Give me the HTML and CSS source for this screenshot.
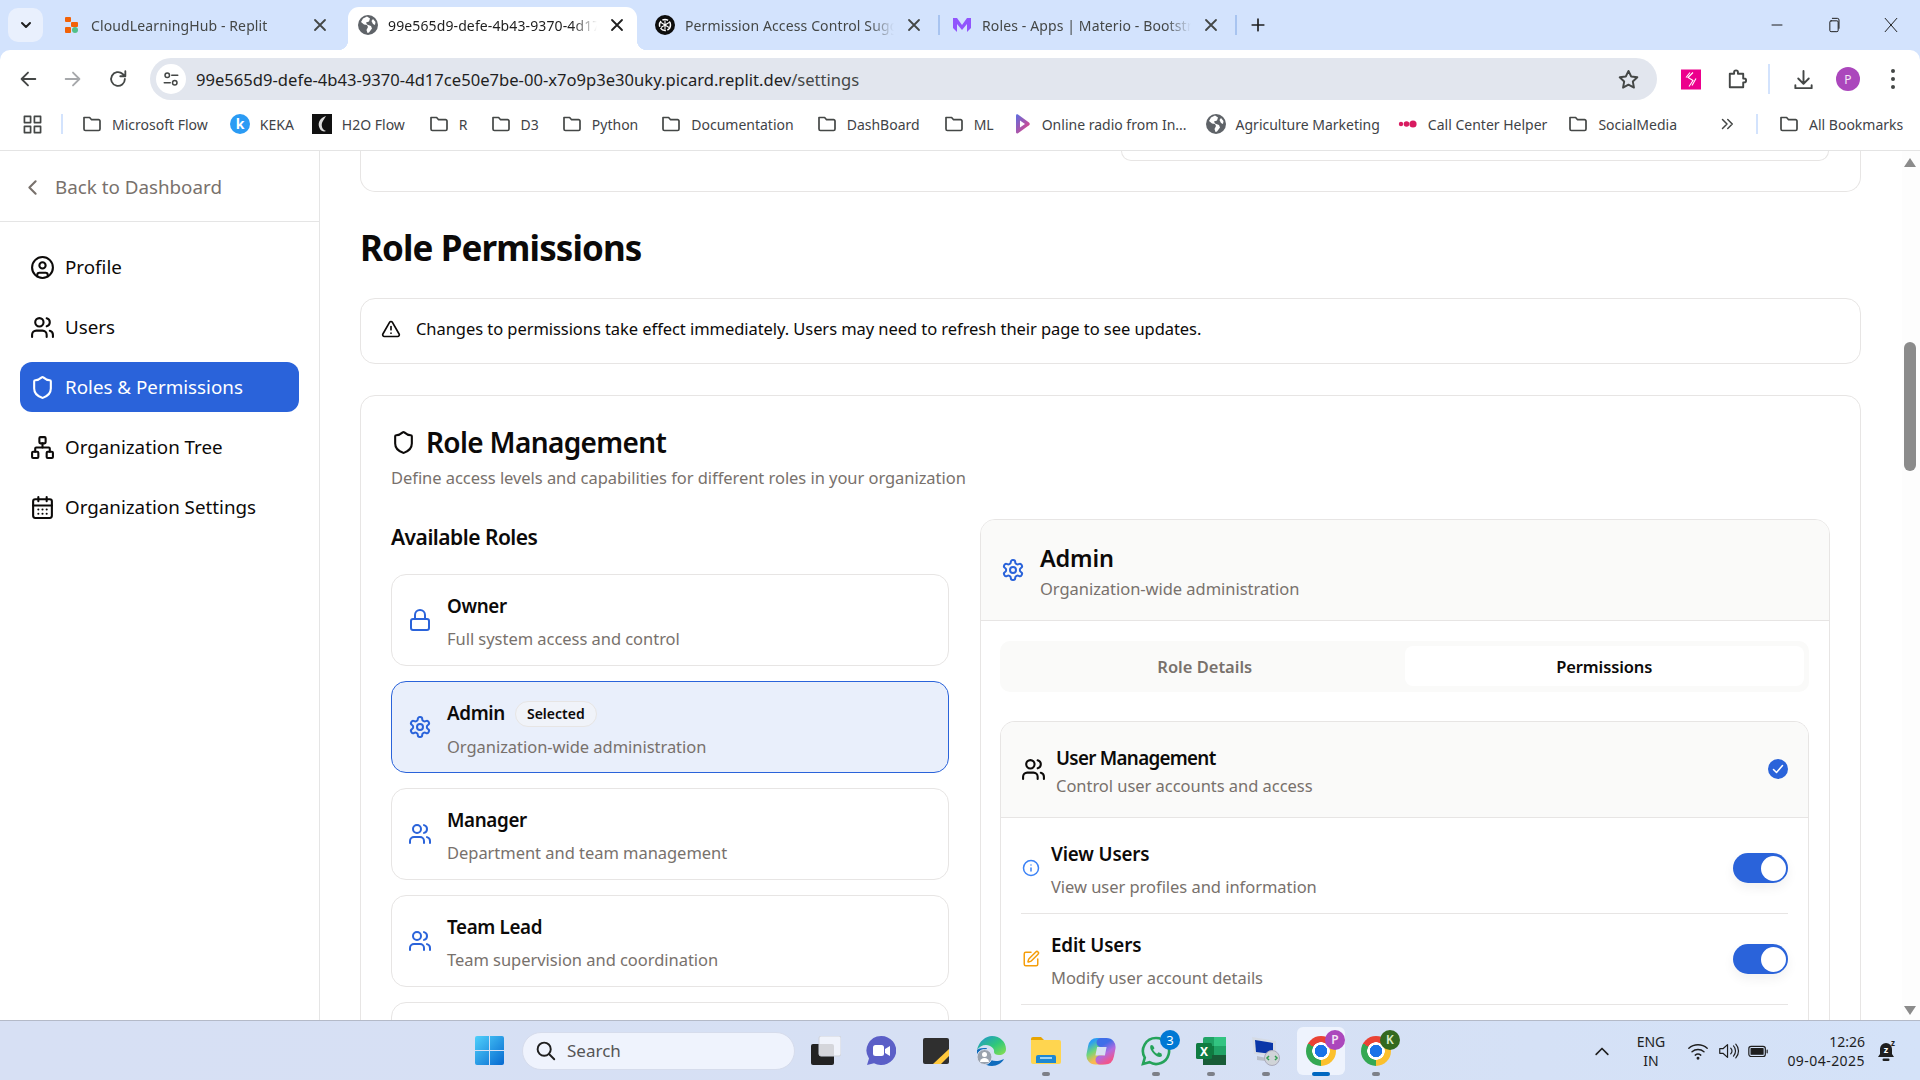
FILE: index.html
```html
<!DOCTYPE html>
<html lang="en">
<head>
<meta charset="utf-8">
<title>Role Permissions</title>
<link rel="stylesheet" href="styles.css">
</head>
<body>
<svg class="sprite" xmlns="http://www.w3.org/2000/svg">
  <symbol id="i-user-circle" viewBox="0 0 24 24"><circle cx="12" cy="12" r="10"/><circle cx="12" cy="10" r="3"/><path d="M7 20.662V19a2 2 0 0 1 2-2h6a2 2 0 0 1 2 2v1.662"/></symbol>
  <symbol id="i-users" viewBox="0 0 24 24"><path d="M16 21v-2a4 4 0 0 0-4-4H6a4 4 0 0 0-4 4v2"/><circle cx="9" cy="7" r="4"/><path d="M22 21v-2a4 4 0 0 0-3-3.87"/><path d="M16 3.13a4 4 0 0 1 0 7.75"/></symbol>
  <symbol id="i-shield" viewBox="0 0 24 24"><path d="M20 13c0 5-3.5 7.5-7.66 8.95a1 1 0 0 1-.67-.01C7.5 20.5 4 18 4 13V6a1 1 0 0 1 1-1c2 0 4.5-1.2 6.24-2.72a1.17 1.17 0 0 1 1.52 0C14.51 3.81 17 5 19 5a1 1 0 0 1 1 1z"/></symbol>
  <symbol id="i-network" viewBox="0 0 24 24"><rect x="16" y="16" width="6" height="6" rx="1"/><rect x="2" y="16" width="6" height="6" rx="1"/><rect x="9" y="2" width="6" height="6" rx="1"/><path d="M5 16v-3a1 1 0 0 1 1-1h12a1 1 0 0 1 1 1v3"/><path d="M12 12V8"/></symbol>
  <symbol id="i-calendar" viewBox="0 0 24 24"><path d="M8 2v4"/><path d="M16 2v4"/><rect width="18" height="18" x="3" y="4" rx="2"/><path d="M3 10h18"/><path d="M8 14h.01"/><path d="M12 14h.01"/><path d="M16 14h.01"/><path d="M8 18h.01"/><path d="M12 18h.01"/><path d="M16 18h.01"/></symbol>
  <symbol id="i-chevron" viewBox="0 0 24 24"><path d="m15 18-6-6 6-6"/></symbol>
  <symbol id="i-alert" viewBox="0 0 24 24"><path d="m21.73 18-8-14a2 2 0 0 0-3.48 0l-8 14A2 2 0 0 0 4 21h16a2 2 0 0 0 1.73-3"/><path d="M12 9v4"/><path d="M12 17h.01"/></symbol>
  <symbol id="i-lock" viewBox="0 0 24 24"><rect width="18" height="11" x="3" y="11" rx="2" ry="2"/><path d="M7 11V7a5 5 0 0 1 10 0v4"/></symbol>
  <symbol id="i-gear" viewBox="0 0 24 24"><path d="M12.22 2h-.44a2 2 0 0 0-2 2v.18a2 2 0 0 1-1 1.73l-.43.25a2 2 0 0 1-2 0l-.15-.08a2 2 0 0 0-2.73.73l-.22.38a2 2 0 0 0 .73 2.73l.15.1a2 2 0 0 1 1 1.72v.51a2 2 0 0 1-1 1.74l-.15.09a2 2 0 0 0-.73 2.73l.22.38a2 2 0 0 0 2.73.73l.15-.08a2 2 0 0 1 2 0l.43.25a2 2 0 0 1 1 1.73V20a2 2 0 0 0 2 2h.44a2 2 0 0 0 2-2v-.18a2 2 0 0 1 1-1.73l.43-.25a2 2 0 0 1 2 0l.15.08a2 2 0 0 0 2.73-.73l.22-.39a2 2 0 0 0-.73-2.73l-.15-.08a2 2 0 0 1-1-1.74v-.5a2 2 0 0 1 1-1.74l.15-.09a2 2 0 0 0 .73-2.73l-.22-.38a2 2 0 0 0-2.73-.73l-.15.08a2 2 0 0 1-2 0l-.43-.25a2 2 0 0 1-1-1.73V4a2 2 0 0 0-2-2z"/><circle cx="12" cy="12" r="3"/></symbol>
  <symbol id="i-info" viewBox="0 0 24 24"><circle cx="12" cy="12" r="10"/><path d="M12 16v-4"/><path d="M12 8h.01"/></symbol>
  <symbol id="i-pen" viewBox="0 0 24 24"><path d="M12 3H5a2 2 0 0 0-2 2v14a2 2 0 0 0 2 2h14a2 2 0 0 0 2-2v-7"/><path d="M18.375 2.625a1 1 0 0 1 3 3l-9.013 9.014a2 2 0 0 1-.853.505l-2.873.84a.5.5 0 0 1-.62-.62l.84-2.873a2 2 0 0 1 .506-.852z"/></symbol>
  <symbol id="b-folder" viewBox="0 0 20 20"><path d="M2 3.500h5.600l2 2.200h7a1.400 1.400 0 0 1 1.400 1.400v8a1.400 1.400 0 0 1-1.400 1.400H3.400A1.400 1.400 0 0 1 2 15.100z"/></symbol>
  <symbol id="b-globe" viewBox="0 0 20 20"><circle cx="10" cy="10" r="10" fill="#5f6368"/><path d="M9 1.500 5 3.500 3 7l3 2.500 3 .5 1 2-1.500 3 1 3 1.500-.5 3-4-1-2.500-4-1.500-1-2 3-1 1-3zM15 4l2.500 3-.5 3-2-1-1.500-3z" fill="#fff"/></symbol>
</svg>

<header class="tabstrip">
  <div class="tab-menu"><svg class="glyph g14" viewBox="0 0 24 24"><path d="m6 9 6 6 6-6"/></svg></div>
  <div class="tab">
    <svg class="favicon" viewBox="0 0 20 20"><rect x="4" y="2" width="6" height="5" rx="1" fill="#f26207"/><rect x="10" y="7" width="7" height="5" rx="1" fill="#f26207"/><rect x="4" y="12" width="6" height="6" rx="1" fill="#f26207"/><circle cx="14" cy="15" r="3" fill="#52c08a"/></svg>
    <span class="tab-title">CloudLearningHub - Replit</span>
    <svg class="glyph g-close" viewBox="0 0 24 24"><path d="M6 6l12 12M18 6 6 18"/></svg>
  </div>
  <div class="tab tab-active">
    <svg class="favicon"><use href="#b-globe"/></svg>
    <span class="tab-title">99e565d9-defe-4b43-9370-4d17ce50e7be</span>
    <svg class="glyph g-close" viewBox="0 0 24 24"><path d="M6 6l12 12M18 6 6 18"/></svg>
  </div>
  <div class="tab tab-sep">
    <svg class="favicon" viewBox="0 0 20 20"><circle cx="10" cy="10" r="10" fill="#0d0d0d"/><circle cx="10" cy="10" r="5.500" fill="none" stroke="#fff" stroke-width="1.500" stroke-dasharray="6 1.500"/><path d="M10 5.500v9M6 7.500l8 5M14 7.500l-8 5" stroke="#fff" stroke-width="1.100"/></svg>
    <span class="tab-title">Permission Access Control Suggestions</span>
    <svg class="glyph g-close" viewBox="0 0 24 24"><path d="M6 6l12 12M18 6 6 18"/></svg>
  </div>
  <div class="tab tab-sep">
    <svg class="favicon" viewBox="0 0 20 20"><path d="M1 3h4l5 7 5-7h4v10l-4 4V9l-5 6-5-6v8l-4-4z" fill="#9155fd"/></svg>
    <span class="tab-title">Roles - Apps | Materio - Bootstrap Admin</span>
    <svg class="glyph g-close" viewBox="0 0 24 24"><path d="M6 6l12 12M18 6 6 18"/></svg>
  </div>
  <svg class="glyph g-plus" viewBox="0 0 24 24"><path d="M12 5v14M5 12h14"/></svg>
  <div class="window-controls">
    <svg class="glyph g-win" viewBox="0 0 24 24"><path d="M6 12h12"/></svg>
    <svg class="glyph g-win" viewBox="0 0 24 24"><rect x="7" y="7" width="10" height="13" rx="1.500"/><path d="M10 4h6a2 2 0 0 1 2 2v10"/></svg>
    <svg class="glyph g-win" viewBox="0 0 24 24"><path d="M5 4l14 16M19 4 5 20"/></svg>
  </div>
</header>

<div class="toolbar">
  <div class="tool"><svg class="glyph g20" viewBox="0 0 24 24"><path d="M20 12H5M12 5l-7 7 7 7"/></svg></div>
  <div class="tool tool-off"><svg class="glyph g20" viewBox="0 0 24 24"><path d="M4 12h15M12 5l7 7-7 7"/></svg></div>
  <div class="tool"><svg class="glyph g20" viewBox="0 0 24 24"><path d="M19.500 12a7.500 7.500 0 1 1-2.400-5.500L20 9M20 3.500V9h-5.500"/></svg></div>
  <div class="omnibox">
    <span class="omni-chip"><svg class="glyph g18" viewBox="0 0 24 24"><circle cx="7" cy="7" r="3"/><path d="M13 7h8M3 17h8"/><circle cx="17" cy="17" r="3"/></svg></span>
    <span class="url">99e565d9-defe-4b43-9370-4d17ce50e7be-00-x7o9p3e30uky.picard.replit.dev<span class="url-path">/settings</span></span>
    <svg class="glyph g22 star" viewBox="0 0 24 24"><path d="m12 3 2.800 5.900 6.400.8-4.700 4.400 1.200 6.400-5.700-3.100-5.700 3.100 1.200-6.400L2.800 9.700l6.400-.8z"/></svg>
  </div>
  <div class="tool"><svg class="ext-pink" viewBox="0 0 20 20"><rect width="20" height="20" fill="#ec008c"/><path d="M12 3 7 8l5 3-4 6M9 3 5 8M15 9l-4 7" fill="none" stroke="#fff" stroke-width="1.100"/></svg></div>
  <div class="tool"><svg class="glyph g22" viewBox="0 0 24 24"><path d="M5 6h4.500V4.500a2 2 0 0 1 4 0V6H19v5h1a2 2 0 0 1 0 4h-1v5H5z"/></svg></div>
  <span class="tool-sep"></span>
  <div class="tool"><svg class="glyph g22" viewBox="0 0 24 24"><path d="M12 3v13M6.500 11l5.500 5.500 5.500-5.500M3.500 18v3h17v-3"/></svg></div>
  <div class="tool"><span class="avatar">P</span></div>
  <div class="tool"><span class="dots"><i></i><i></i><i></i></span></div>
</div>

<nav class="bookmarks">
  <svg class="glyph apps" viewBox="0 0 20 20"><rect x="1.500" y="1.500" width="6.500" height="6.500"/><rect x="12" y="1.500" width="6.500" height="6.500"/><rect x="1.500" y="12" width="6.500" height="6.500"/><rect x="12" y="12" width="6.500" height="6.500"/></svg>
  <span class="bm-sep"></span>
  <span class="bm"><svg class="bm-icon folder"><use href="#b-folder"/></svg>Microsoft Flow</span>
  <span class="bm gap-18"><svg class="bm-icon" viewBox="0 0 20 20"><circle cx="10" cy="10" r="10" fill="#2b9bf4"/><text x="10" y="14.500" class="keka-k">k</text></svg>KEKA</span>
  <span class="bm gap-24"><svg class="bm-icon" viewBox="0 0 20 20"><rect width="20" height="20" fill="#111"/><path d="M14 2C7 4 5 10 8 15c1 2 4 3 6 2-3-1-5-4-4-8 1-3 3-5 4-7z" fill="#ddd"/></svg>H2O Flow</span>
  <span class="bm gap-23"><svg class="bm-icon folder"><use href="#b-folder"/></svg>R</span>
  <span class="bm gap-23"><svg class="bm-icon folder"><use href="#b-folder"/></svg>D3</span>
  <span class="bm gap-23"><svg class="bm-icon folder"><use href="#b-folder"/></svg>Python</span>
  <span class="bm gap-23"><svg class="bm-icon folder"><use href="#b-folder"/></svg>Documentation</span>
  <span class="bm gap-24"><svg class="bm-icon folder"><use href="#b-folder"/></svg>DashBoard</span>
  <span class="bm gap-18"><svg class="bm-icon folder"><use href="#b-folder"/></svg>ML</span>
  <span class="bm gap-19"><svg class="bm-icon" viewBox="0 0 20 20"><defs><linearGradient id="radio" x1="0" y1="0" x2="1" y2="1"><stop offset="0" stop-color="#5b6ee1"/><stop offset="1" stop-color="#f0407a"/></linearGradient></defs><path d="M4 1.500c0-1 1-1.500 2-1l11 8c1 .8 1 2 0 2.800l-11 8c-1 .5-2 0-2-1z" fill="url(#radio)"/><path d="M8 6.500v7l5-3.500z" fill="#fff"/></svg>Online radio from In...</span>
  <span class="bm gap-18"><svg class="bm-icon"><use href="#b-globe"/></svg>Agriculture Marketing</span>
  <span class="bm gap-21"><svg class="bm-icon" viewBox="0 0 20 20"><circle cx="3" cy="10" r="2.200" fill="#d81b60"/><circle cx="8.500" cy="10" r="2.800" fill="#d81b60"/><circle cx="15" cy="10" r="3.600" fill="#d81b60"/></svg>Call Center Helper</span>
  <span class="bm gap-17"><svg class="bm-icon folder"><use href="#b-folder"/></svg>SocialMedia</span>
  <svg class="glyph bm-more" viewBox="0 0 24 24"><path d="m6 6 6 6-6 6M13 6l6 6-6 6"/></svg>
  <span class="bm-sep bm-sep-end"></span>
  <span class="bm"><svg class="bm-icon folder"><use href="#b-folder"/></svg>All Bookmarks</span>
</nav>

<div class="app">
  <aside class="sidebar">
    <div class="back"><svg class="icon i25"><use href="#i-chevron"/></svg><span>Back to Dashboard</span></div>
    <ul class="nav">
      <li class="nav-item"><svg class="icon i25"><use href="#i-user-circle"/></svg>Profile</li>
      <li class="nav-item"><svg class="icon i25"><use href="#i-users"/></svg>Users</li>
      <li class="nav-item nav-active"><svg class="icon i25"><use href="#i-shield"/></svg>Roles &amp; Permissions</li>
      <li class="nav-item"><svg class="icon i25"><use href="#i-network"/></svg>Organization Tree</li>
      <li class="nav-item"><svg class="icon i25"><use href="#i-calendar"/></svg>Organization Settings</li>
    </ul>
  </aside>

  <main class="main">
    <div class="stub-card"><div class="stub-inner"></div></div>
    <h1 class="page-title">Role Permissions</h1>
    <div class="alert"><svg class="icon i20"><use href="#i-alert"/></svg><span>Changes to permissions take effect immediately. Users may need to refresh their page to see updates.</span></div>

    <section class="role-card">
      <h2 class="section-title"><svg class="icon i25"><use href="#i-shield"/></svg>Role Management</h2>
      <p class="section-desc">Define access levels and capabilities for different roles in your organization</p>
      <div class="columns">
        <div class="roles">
          <h3 class="roles-title">Available Roles</h3>
          <div class="role-list">
            <div class="role"><svg class="icon i24 blue"><use href="#i-lock"/></svg><div class="role-text"><div class="name">Owner</div><div class="desc">Full system access and control</div></div></div>
            <div class="role role-selected"><svg class="icon i24 blue"><use href="#i-gear"/></svg><div class="role-text"><div class="name">Admin<span class="badge">Selected</span></div><div class="desc">Organization-wide administration</div></div></div>
            <div class="role"><svg class="icon i24 blue"><use href="#i-users"/></svg><div class="role-text"><div class="name">Manager</div><div class="desc">Department and team management</div></div></div>
            <div class="role"><svg class="icon i24 blue"><use href="#i-users"/></svg><div class="role-text"><div class="name">Team Lead</div><div class="desc">Team supervision and coordination</div></div></div>
            <div class="role"></div>
          </div>
        </div>

        <div class="panel">
          <div class="panel-head">
            <svg class="icon i24 blue"><use href="#i-gear"/></svg>
            <div class="panel-text"><div class="panel-name">Admin</div><div class="desc">Organization-wide administration</div></div>
          </div>
          <div class="panel-body">
            <div class="tabs"><div class="tabs-item">Role Details</div><div class="tabs-item tabs-active">Permissions</div></div>
            <div class="perm-card">
              <div class="perm-head">
                <svg class="icon i25"><use href="#i-users"/></svg>
                <div class="perm-text"><div class="name">User Management</div><div class="desc">Control user accounts and access</div></div>
                <svg class="check" viewBox="0 0 20 20"><circle cx="10" cy="10" r="10"/><path d="m5.500 10.500 3 3 6-7"/></svg>
              </div>
              <div class="perm-rows">
                <div class="perm-row"><svg class="icon i18 info-blue"><use href="#i-info"/></svg><div class="row-text"><div class="name">View Users</div><div class="desc">View user profiles and information</div></div><span class="toggle"><span class="thumb"></span></span></div>
                <div class="perm-row"><svg class="icon i18 amber"><use href="#i-pen"/></svg><div class="row-text"><div class="name">Edit Users</div><div class="desc">Modify user account details</div></div><span class="toggle"><span class="thumb"></span></span></div>
              </div>
            </div>
          </div>
        </div>
      </div>
    </section>
  </main>

  <div class="scrollbar">
    <span class="sb-up"></span>
    <span class="sb-thumb"></span>
    <span class="sb-down"></span>
  </div>
</div>

<footer class="taskbar">
  <svg class="win-logo" viewBox="0 0 29 29"><defs><linearGradient id="win" x1="0" y1="0" x2="1" y2="1"><stop offset="0" stop-color="#4fd0fb"/><stop offset="1" stop-color="#0669d0"/></linearGradient></defs><path d="M0 2a2 2 0 0 1 2-2h12v14H0zM15 0h12a2 2 0 0 1 2 2v12H15zM0 15h14v14H2a2 2 0 0 1-2-2zM15 15h14v12a2 2 0 0 1-2 2H15z" fill="url(#win)"/></svg>
  <div class="search"><svg class="glyph g22 search-icon" viewBox="0 0 24 24"><circle cx="10.500" cy="10.500" r="7.500"/><path d="m16 16 6 6"/></svg><span>Search</span></div>
  <div class="apps-row">
    <div class="cell"><svg class="tb-icon" viewBox="0 0 30 30"><rect x="0" y="8" width="23" height="21" rx="2" fill="#222"/><rect x="8" y="0" width="22" height="20" rx="2" fill="#f4f6fb" fill-opacity=".85" stroke="#cfd3dc"/></svg></div>
    <div class="cell"><svg class="tb-icon" viewBox="0 0 30 30"><path d="M15 0a15 14.500 0 1 1-7 27.200L1 29l2-6.500A15 14.500 0 0 1 15 0z" fill="#5b5fc7"/><rect x="7" y="9" width="11" height="11" rx="2.500" fill="#fff"/><path d="m19 13 5-3v10l-5-3z" fill="#fff"/></svg></div>
    <div class="cell"><svg class="tb-icon" viewBox="0 0 30 30"><rect x="2" y="2" width="26" height="26" rx="2" fill="#2f2f2f"/><path d="M28 13v7l-8 8h-8z" fill="#ffc83d"/></svg></div>
    <div class="cell"><svg class="tb-icon" viewBox="0 0 30 30"><defs><linearGradient id="edge" x1="0" y1="0" x2="1" y2="1"><stop offset="0" stop-color="#1e90d8"/><stop offset=".55" stop-color="#30c87a"/><stop offset="1" stop-color="#8ee04e"/></linearGradient></defs><path d="M1 14C3 5 10 0 16 0c8 0 14 6 14 13 0 4-3 6-7 6-3 0-5-1-5-3 1-3-3-7-8-7-4 0-7 2-9 5z" fill="url(#edge)"/><path d="M1 14c-1 9 7 16 15 16 5 0 10-3 12-7-4 2-9 3-13 1-5-2-7-7-4-12-4 0-8 0-10 2z" fill="#0f6cbd"/><circle cx="8.500" cy="21" r="7.500" fill="#9aa2ad" stroke="#dde3f3"/><circle cx="8.500" cy="18.500" r="2.500" fill="#fff"/><path d="M4 26a4.500 4 0 0 1 9 0z" fill="#fff"/></svg></div>
    <div class="cell cell-dot"><svg class="tb-icon" viewBox="0 0 30 30"><path d="M0 3a2 2 0 0 1 2-2h8l3 3h-13z" fill="#e8a500"/><path d="M0 4h28a2 2 0 0 1 2 2v20a2 2 0 0 1-2 2H2a2 2 0 0 1-2-2z" fill="#ffd54f"/><path d="M5 27h20v-6a2 2 0 0 0-2-2H7a2 2 0 0 0-2 2z" fill="#1e88d2"/><rect x="9" y="21" width="12" height="2" fill="#9fd4f5"/></svg></div>
    <div class="cell"><svg class="tb-icon" viewBox="0 0 30 30"><defs><linearGradient id="cop-a" x1="0" y1="0" x2=".4" y2="1"><stop offset="0" stop-color="#2a9df4"/><stop offset=".5" stop-color="#6fd67a"/><stop offset="1" stop-color="#f9b84f"/></linearGradient><linearGradient id="cop-b" x1=".6" y1="0" x2="1" y2="1"><stop offset="0" stop-color="#3f6ee8"/><stop offset=".5" stop-color="#b36be0"/><stop offset="1" stop-color="#f0568c"/></linearGradient></defs><path d="M15 6.500H11C8 6.500 7 8.500 6.500 11L5 18.500C4.500 21.500 6.500 24 9.500 24H16" fill="none" stroke="url(#cop-a)" stroke-width="9" stroke-linecap="round"/><path d="M14 24H19c3 0 4-2 4.500-4.500L25 12c.5-3-1.500-5.500-4.500-5.500H15" fill="none" stroke="url(#cop-b)" stroke-width="9" stroke-linecap="round"/></svg></div>
    <div class="cell cell-dot"><svg class="tb-icon" viewBox="0 0 30 30"><path d="M15 2a13 13 0 1 1-6.500 24.200L2 28l1.800-6.300A13 13 0 0 1 15 2z" fill="none" stroke="#25a35a" stroke-width="2.600"/><path d="M10 9c-2 2 0 6 3 9s6 4 8 2l-.5-2.500-3-1.200-1.400 1.400c-2-1-3-2.200-4-4l1.400-1.400L12 9.500z" fill="#25a35a"/></svg><span class="tb-badge">3</span></div>
    <div class="cell cell-dot"><svg class="tb-icon" viewBox="0 0 30 30"><rect x="7" y="1" width="23" height="28" rx="2" fill="#21a366"/><rect x="18" y="1" width="12" height="9" fill="#33c481"/><rect x="7" y="10" width="11" height="9" fill="#107c41"/><rect x="18" y="19" width="12" height="10" fill="#185c37"/><rect x="7" y="19" width="11" height="10" fill="#185c37"/><rect x="0" y="7" width="16" height="16" rx="1.500" fill="#0f7b41"/><text x="8" y="19.500" class="xl-x">X</text></svg></div>
    <div class="cell cell-dot"><svg class="tb-icon" viewBox="0 0 30 30"><path d="M1 1l24 4v16L3 18z" fill="#d5dbe5"/><path d="M4 4l18 3v11L5 16z" fill="#0a36a8"/><path d="M6 20l14 3 3 3-17-2z" fill="#b8bec9"/><circle cx="21" cy="22" r="7.500" fill="#d0d4d8" stroke="#aab"/><path d="M18 20l-2 2 2 2M24 20l2 2-2 2" stroke="#2e9e4f" stroke-width="1.500" fill="none"/></svg></div>
    <div class="cell cell-on"><span class="chrome"></span><span class="profile-chip chip-p">P</span></div>
    <div class="cell cell-dot"><span class="chrome"></span><span class="profile-chip chip-k">K</span></div>
  </div>
  <div class="tray">
    <svg class="glyph tray-caret" viewBox="0 0 24 24"><path d="m5 16 7-7 7 7"/></svg>
    <div class="lang"><span>ENG</span><span>IN</span></div>
    <svg class="glyph tray-icon wifi" viewBox="0 0 24 24"><path d="M2 9a15 15 0 0 1 20 0M5.500 12.800a10 10 0 0 1 13 0M9 16.500a5 5 0 0 1 6 0"/><circle cx="12" cy="20" r=".8"/></svg>
    <svg class="glyph tray-icon" viewBox="0 0 24 24"><path d="M3 9.500v5h3.500l5 4.500V5L6.500 9.500zM15 9a4 4 0 0 1 0 6M18 6.500a8 8 0 0 1 0 11M20.500 4.500a11 11 0 0 1 0 15"/></svg>
    <svg class="glyph tray-icon" viewBox="0 0 24 24"><rect x="2" y="7" width="18" height="11" rx="2.500"/><rect x="4.500" y="9.500" width="13" height="6" class="solid"/><path d="M22 11v3"/></svg>
    <div class="clock"><span>12:26</span><span>09-04-2025</span></div>
    <svg class="bell" viewBox="0 0 22 24"><path d="M11 4a6 6 0 0 0-6 6v5l-2 3h16l-2-3v-5a6 6 0 0 0-6-6z"/><rect x="7.500" y="19.500" width="7" height="2.500" rx="1.200"/><text x="11" y="14" class="bell-z">z</text><text x="18" y="7" class="bell-z2">z</text></svg>
  </div>
</footer>
</body>
</html>
```

FILE: styles.css
```css
* { box-sizing: border-box; }
html, body { margin: 0; height: 100%; }
body {
  width: 1920px;
  height: 1080px;
  overflow: hidden;
  display: flex;
  flex-direction: column;
  font-family: "Noto Sans", "Open Sans", sans-serif;
  color: #0c0a09;
  background: #d3e3fd;
}
h1, h2, h3, p, ul { margin: 0; padding: 0; }
ul { list-style: none; }
.sprite { position: absolute; width: 0; height: 0; overflow: hidden; }

/* generic icons */
.icon { fill: none; stroke: currentColor; stroke-width: 2; stroke-linecap: round; stroke-linejoin: round; flex: none; }
.i25 { width: 25px; height: 25px; }
.i24 { width: 24px; height: 24px; }
.i20 { width: 20px; height: 20px; }
.i18 { width: 18px; height: 18px; }
.blue { color: #2a63da; }
.info-blue { color: #3b82f6; }
.amber { color: #f59e0b; }
.glyph { fill: none; stroke: #444746; stroke-width: 2; stroke-linecap: round; stroke-linejoin: round; flex: none; }
.g14 { width: 16px; height: 16px; stroke: #1f1f1f; stroke-width: 3; }
.g18 { width: 18px; height: 18px; stroke-width: 2; }
.g20 { width: 22px; height: 22px; }
.g22 { width: 23px; height: 23px; }

/* tab strip */
.tabstrip { height: 50px; display: flex; align-items: flex-end; padding-left: 8px; flex: none; background: #d3e3fd; }
.tab-menu { width: 35px; height: 34px; margin: 0 8px 8px 0; border-radius: 10px; background: #e9f0fd; display: flex; align-items: center; justify-content: center; }
.tab { width: 289px; height: 43px; margin-right: 8px; padding: 0 10px 7px; display: flex; align-items: center; gap: 10px; position: relative; font-size: 14px; color: #444746; }
.tab-active { background: #fff; border-radius: 11px 11px 0 0; color: #1f1f1f; }
.tab-active::before, .tab-active::after { content: ""; position: absolute; bottom: 0; width: 10px; height: 10px; }
.tab-active::before { left: -10px; background: radial-gradient(circle at 0 0, transparent 10px, #fff 10.500px); }
.tab-active::after { right: -10px; background: radial-gradient(circle at 100% 0, transparent 10px, #fff 10.500px); }
.tab-sep::after { content: ""; position: absolute; right: -6px; top: 8px; width: 2px; height: 20px; background: #a8c4f0; }
.favicon { width: 20px; height: 20px; flex: none; }
.tab-title { flex: 1; white-space: nowrap; overflow: hidden; min-width: 0; letter-spacing: 0.120px; -webkit-mask-image: linear-gradient(to right, #000 88%, transparent); mask-image: linear-gradient(to right, #000 88%, transparent); }
.g-close { width: 20px; height: 20px; stroke-width: 2.200; }
.tab-active .g-close { stroke: #1f1f1f; }
.g-plus { width: 20px; height: 20px; margin: 0 0 15px 9px; stroke: #1f1f1f; }
.window-controls { margin-left: auto; display: flex; gap: 37px; padding-right: 19px; margin-bottom: 15px; }
.g-win { width: 20px; height: 20px; stroke: #1f1f1f; stroke-width: 1.200; }

/* toolbar */
.toolbar { height: 50px; flex: none; background: #fff; border-radius: 10px 10px 0 0; display: flex; align-items: flex-start; padding: 8px 4.500px 0 5px; }
.tool { width: 45px; height: 42px; display: flex; align-items: center; justify-content: center; flex: none; }
.tool-off .glyph { stroke: #a6a8ab; }
.omnibox { width: 1507px; height: 42px; margin: 0 11.500px 0 10px; border-radius: 21px; background: #e2e6ee; display: flex; align-items: center; padding: 0 17px 0 6px; flex: none; }
.omni-chip { width: 30px; height: 30px; border-radius: 50%; background: #fff; display: flex; align-items: center; justify-content: center; flex: none; }
.url { margin-left: 10px; font-size: 16.600px; color: #1f1f1f; white-space: nowrap; }
.url-path { color: #444746; }
.star { margin-left: auto; }
.ext-pink { width: 20px; height: 21px; }
.tool-sep { width: 2px; height: 30px; margin: 6px 11px 0 9px; background: #d3e3fd; flex: none; }
.avatar { width: 24px; height: 24px; border-radius: 50%; background: #ab47bc; color: #f3e5f5; font-size: 12px; display: flex; align-items: center; justify-content: center; }
.dots { display: flex; flex-direction: column; gap: 4px; }
.dots i { width: 4px; height: 4px; border-radius: 50%; background: #444746; }

/* bookmarks */
.bookmarks { height: 50px; flex: none; background: #fff; display: flex; align-items: center; padding: 0 0 2px 23px; font-size: 14px; color: #3f4347; }
.apps { width: 19px; height: 19px; stroke-width: 1.800; stroke-linecap: butt; }
.bm-sep { width: 2px; height: 20px; background: #d3e3fd; margin: 0 19px; flex: none; }
.bm-sep-end { margin-left: 20px; margin-right: 21px; }
.bm { display: flex; align-items: center; gap: 10px; white-space: nowrap; margin-right: 22px; }
.gap-17 { margin-right: 17px; }
.gap-18 { margin-right: 18px; }
.gap-19 { margin-right: 19px; }
.gap-21 { margin-right: 21px; }
.gap-23 { margin-right: 23px; }
.gap-24 { margin-right: 24px; }
.bm-icon { width: 20px; height: 20px; flex: none; }
.folder { fill: none; stroke: #444746; stroke-width: 1.700; stroke-linejoin: round; }
.keka-k { font: 700 14px "Noto Sans", sans-serif; fill: #fff; text-anchor: middle; }
.bm-more { width: 18px; height: 18px; margin-left: 24px; margin-right: 0; }

/* app layout */
.app { flex: 1; min-height: 0; display: flex; background: #fff; border-top: 1px solid #e4e4e4; }
.sidebar { width: 320px; flex: none; border-right: 1px solid #e5e5e5; }
.back { height: 71px; padding: 2px 0 0 20px; display: flex; align-items: center; gap: 10px; border-bottom: 1px solid #e5e5e5; font-size: 18.800px; color: #78716c; }
.back .icon { color: #78716c; }
.nav { padding: 20px 20px; display: flex; flex-direction: column; gap: 10px; }
.nav-item { height: 50px; padding: 0 10px 0; border-radius: 12px; display: flex; align-items: center; gap: 10px; font-size: 18.800px; }
.nav-active { background: #2a63da; color: #fff; }

/* main column */
.main { flex: 1; min-width: 0; padding: 0 41px 0 40px; overflow: hidden; }
.stub-card { height: 41px; border: 1px solid #e7e5e4; border-top: 0; border-radius: 0 0 15px 15px; }
.stub-inner { height: 10px; margin-left: 760px; margin-right: 31px; border: 1px solid #e7e5e4; border-top: 0; border-radius: 0 0 15px 15px; }
.page-title { margin: 33px 0 28px; font-size: 35px; line-height: 45px; font-weight: 700; letter-spacing: -0.9px; }
.alert { height: 66px; border: 1px solid #e7e5e4; border-radius: 15px; padding: 0 21px 5px 20px; display: flex; align-items: center; gap: 15px; font-size: 16.500px; letter-spacing: -0.060px; }
.role-card { margin-top: 31px; border: 1px solid #e7e5e4; border-radius: 15px; padding: 29px 30px 0; }
.section-title { display: flex; align-items: center; gap: 10px; font-size: 28px; line-height: 34px; font-weight: 600; letter-spacing: -0.650px; }
.section-desc { margin-top: 7px; font-size: 16.500px; line-height: 24px; color: #78716c; letter-spacing: -0.050px; }
.columns { margin-top: 29px; display: grid; grid-template-columns: 558px 1fr; gap: 31px; }
.roles-title { padding-top: 3px; font-size: 21px; line-height: 30px; font-weight: 600; letter-spacing: -0.500px; margin-bottom: 22px; }
.role-list { display: flex; flex-direction: column; gap: 15px; }
.role { height: 92px; border: 1px solid #e7e5e4; border-radius: 15px; padding: 0 16px; display: flex; align-items: center; gap: 15px; flex: none; }
.role-selected { background: #e9effb; border-color: #2a63da; }
.role-text, .row-text { padding-top: 5px; }
.name { display: flex; align-items: center; font-size: 18.800px; line-height: 25px; font-weight: 600; letter-spacing: -0.350px; }
.desc { margin-top: 7px; font-size: 16.500px; line-height: 25px; color: #78716c; letter-spacing: -0.040px; }
.badge { margin-left: 10px; height: 26px; padding: 0 11px; border: 1px solid #e7e5e4; border-radius: 13px; display: flex; align-items: center; font-size: 14px; font-weight: 600; background: #f0f3f9; letter-spacing: 0; }

/* role detail panel */
.panel { border: 1px solid #e7e5e4; border-radius: 15px; overflow: hidden; }
.panel-head { height: 101px; padding: 0 21px 0 20px; border-bottom: 1px solid #e7e5e4; background: #fafaf9; display: flex; align-items: center; gap: 15px; }
.panel-text { padding-top: 4px; }
.panel-name { font-size: 23.500px; line-height: 30px; font-weight: 600; letter-spacing: -0.200px; }
.panel-text .desc { margin-top: 3px; }
.panel-body { padding: 20px 20px 0 19px; }
.tabs { height: 51px; padding: 5px; border-radius: 10px; background: #fafaf9; display: grid; grid-template-columns: 1fr 1fr; }
.tabs-item { height: 40px; border-radius: 8px; display: flex; align-items: center; justify-content: center; font-size: 16.500px; font-weight: 600; color: #78716c; }
.tabs-active { background: #fff; color: #0c0a09; letter-spacing: -0.100px; }
.perm-card { margin-top: 29px; border: 1px solid #e7e5e4; border-bottom: 0; border-radius: 15px 15px 0 0; overflow: hidden; }
.perm-head { height: 96px; padding: 0 20px 1px 20px; background: #fafaf9; border-bottom: 1px solid #e7e5e4; display: flex; align-items: center; gap: 10px; }
.perm-text { padding-top: 5px; flex: 1; }
.perm-text .name { letter-spacing: -0.700px; }
.perm-text .desc { margin-top: 2px; }
.check { width: 20px; height: 20px; flex: none; }
.check circle { fill: #2a63da; }
.check path { fill: none; stroke: #fff; stroke-width: 1.500; stroke-linecap: round; stroke-linejoin: round; }
.perm-rows { padding: 5px 20px 0 20px; height: 300px; }
.perm-row { height: 91px; border-bottom: 1px solid #e7e5e4; display: flex; align-items: center; gap: 11px; padding-left: 1px; }
.row-text { flex: 1; padding-top: 5px; }
.row-text .name { letter-spacing: -0.150px; }
.toggle { width: 55px; height: 30px; padding: 2.500px; border-radius: 15px; background: #2a63da; display: flex; justify-content: flex-end; box-shadow: 0 5px 12px rgba(0,0,0,.06); }
.thumb { width: 25px; height: 25px; border-radius: 50%; background: #fff; }

/* page scrollbar */
.scrollbar { width: 18px; flex: none; background: #fdfdfd; display: flex; flex-direction: column; align-items: center; padding: 7px 2px 5px 0; }
.sb-up, .sb-down { width: 0; height: 0; border-left: 6px solid transparent; border-right: 6px solid transparent; }
.sb-up { border-bottom: 9px solid #8b8b8b; }
.sb-down { border-top: 9px solid #8b8b8b; margin-top: auto; }
.sb-thumb { width: 12px; height: 129px; margin-top: 175px; border-radius: 6px; background: #8b8b8b; }

/* taskbar */
.taskbar { height: 60px; flex: none; border-top: 1px solid #b4bac8; background: linear-gradient(90deg, #d7e0f4, #d6e0f4 60%, #d4e2f8); display: flex; align-items: center; padding-left: 475px; }
.win-logo { width: 29px; height: 29px; flex: none; }
.search { width: 273px; height: 38px; margin-left: 18px; border-radius: 19px; background: #eff3fd; border: 1px solid #d6dcec; display: flex; align-items: center; padding-left: 12px; gap: 11px; font-size: 17px; color: #555; flex: none; }
.search-icon { stroke: #1f1f1f; width: 21px; height: 21px; stroke-width: 2.200; }
.apps-row { margin-left: 3px; display: flex; flex: none; }
.cell { width: 55px; height: 48px; display: flex; align-items: center; justify-content: center; position: relative; }
.tb-icon { width: 30px; height: 30px; position: relative; }
.cell-dot::after, .cell-on::after { content: ""; position: absolute; bottom: -1px; left: 50%; height: 4px; border-radius: 2px; transform: translateX(-50%); }
.cell-dot::after { width: 8px; background: #7d8088; }
.cell-on::after { width: 18px; background: #0067c0; }
.cell-on::before { content: ""; position: absolute; inset: 0 3px 0 4px; border-radius: 6px; background: #eef3fd; }
.chrome { width: 30px; height: 30px; border-radius: 50%; position: relative; background: radial-gradient(circle, #1a73e8 0 6px, #fff 6.500px 8.500px, transparent 9px), conic-gradient(#ea4335 0 60deg, #fbc02d 60deg 180deg, #34a853 180deg 300deg, #ea4335 300deg); }
.profile-chip { position: absolute; top: 3px; right: 3px; width: 20px; height: 20px; border-radius: 50%; display: flex; align-items: center; justify-content: center; font-size: 12px; font-weight: 600; }
.chip-p { background: #ab47bc; color: #f3e5f5; }
.chip-k { background: #33691e; color: #dcedc8; }
.tb-badge { position: absolute; top: 3px; right: 3px; width: 20px; height: 20px; border-radius: 50%; background: #0078d4; color: #fff; font-size: 13px; display: flex; align-items: center; justify-content: center; }
.xl-x { font: 700 12px "Noto Sans", sans-serif; fill: #fff; text-anchor: middle; }
.tray { margin-left: auto; width: 332px; padding-right: 21px; display: flex; align-items: center; justify-content: flex-end; font-size: 14px; color: #1f1f1f; flex: none; }
.tray-caret { width: 20px; height: 20px; stroke: #1f1f1f; margin-right: 22px; }
.lang { width: 34px; display: flex; flex-direction: column; align-items: center; line-height: 19px; margin-right: 15px; }
.tray-icon { width: 30px; height: 22px; stroke: #1f1f1f; stroke-width: 1.300; }
.wifi { stroke-width: 1.600; }
.solid { fill: #1f1f1f; }
.clock { width: 92px; display: flex; flex-direction: column; align-items: flex-end; line-height: 19px; }
.clock span:last-child { letter-spacing: 0.450px; }
.bell { width: 22px; height: 24px; margin-left: 10px; fill: #1f1f1f; margin-right: 2px; flex: none; }
.bell-z { font: 700 9px "Noto Sans", sans-serif; fill: #fff; text-anchor: middle; }
.bell-z2 { font: 700 8px "Noto Sans", sans-serif; fill: #1f1f1f; text-anchor: middle; }
```
